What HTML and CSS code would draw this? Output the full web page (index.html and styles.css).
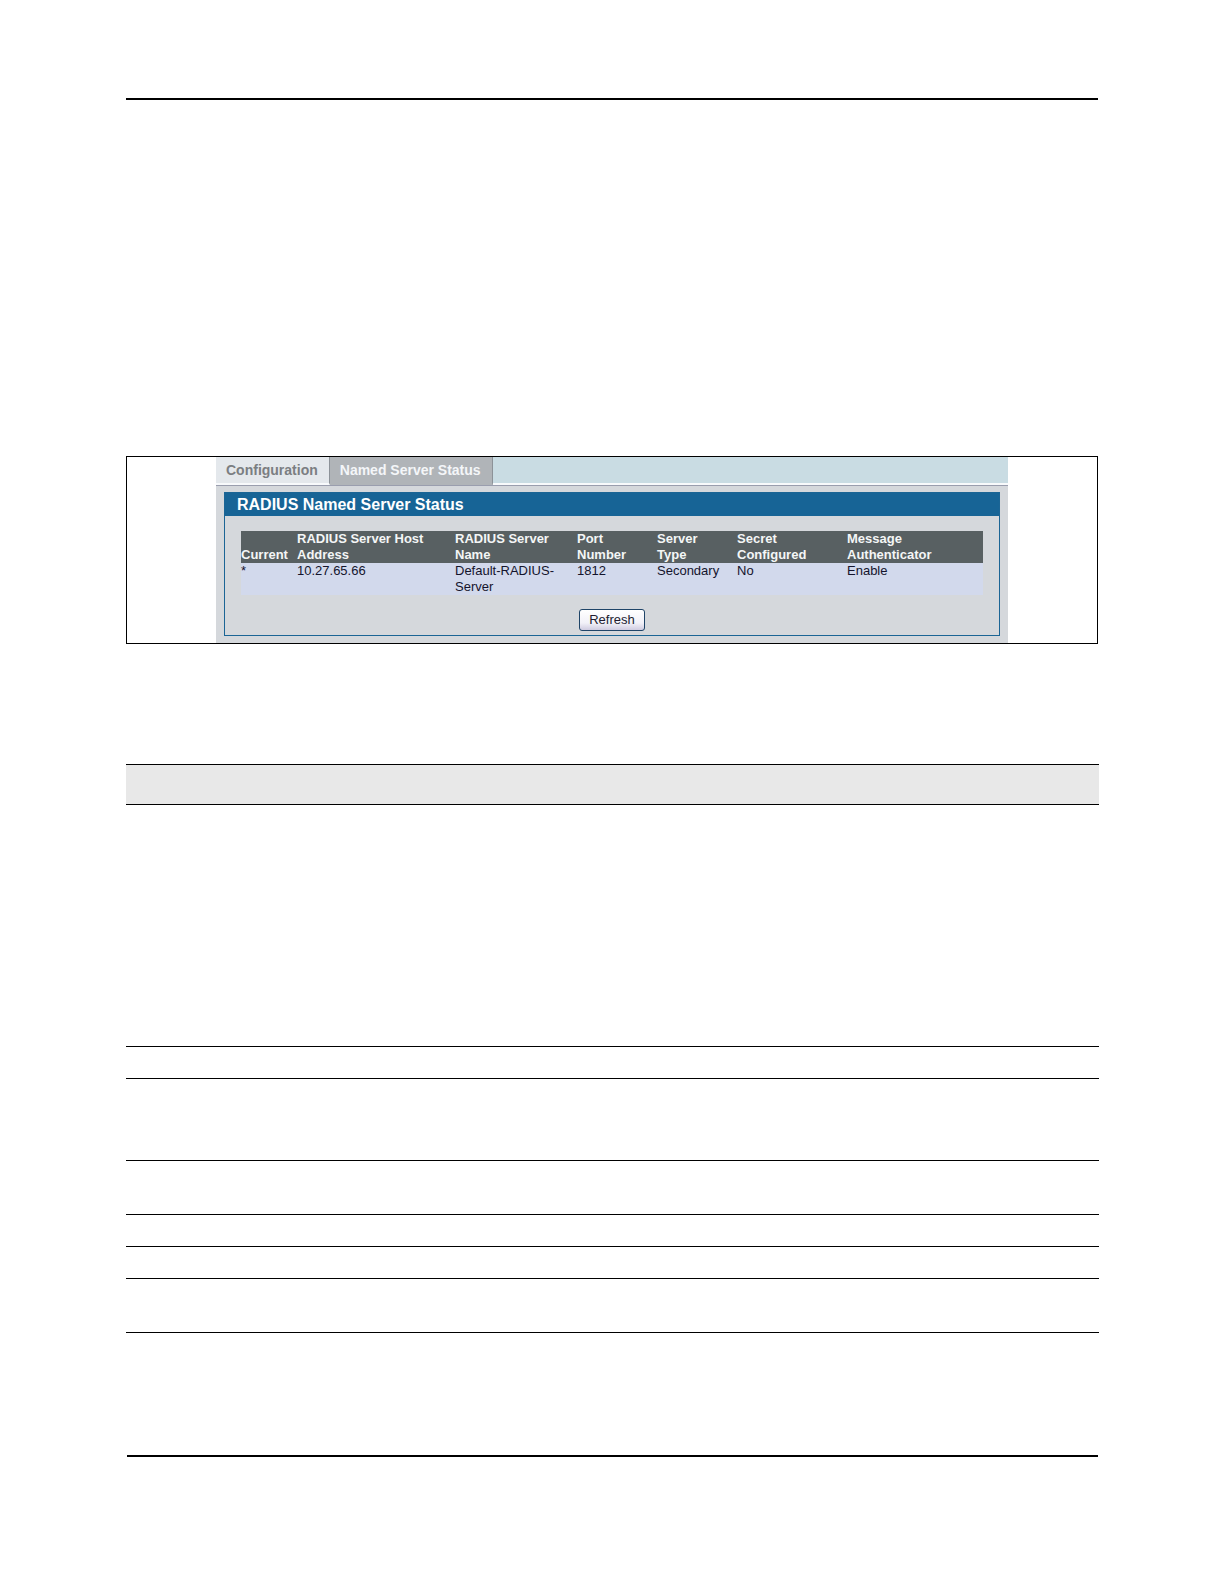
FILE: index.html
```
<!DOCTYPE html>
<html lang="en">
<head>
    <meta charset="UTF-8">
    <meta name="viewport" content="width=device-width, initial-scale=1.0">
    <title>RADIUS Named Server Status</title>
    <link rel="stylesheet" href="styles.css">
</head>
<body>
    <div class="page">
        <header class="page-header"></header>

        <main>
            <div class="figure">
                <div class="console">
                    <nav class="tabs">
                        <a href="#configuration" class="tab">Configuration</a>
                        <a href="#status" class="tab active">Named Server Status</a>
                    </nav>
                    <section class="panel" id="status">
                        <h2>RADIUS Named Server Status</h2>
                        <table class="servers">
                            <colgroup>
                                <col class="col-current">
                                <col class="col-host">
                                <col class="col-name">
                                <col class="col-port">
                                <col class="col-type">
                                <col class="col-secret">
                                <col>
                            </colgroup>
                            <thead>
                                <tr>
                                    <th>Current</th>
                                    <th>RADIUS Server Host<br>Address</th>
                                    <th>RADIUS Server<br>Name</th>
                                    <th>Port<br>Number</th>
                                    <th>Server<br>Type</th>
                                    <th>Secret<br>Configured</th>
                                    <th>Message<br>Authenticator</th>
                                </tr>
                            </thead>
                            <tbody>
                                <tr>
                                    <td>*</td>
                                    <td>10.27.65.66</td>
                                    <td>Default-RADIUS-<br>Server</td>
                                    <td>1812</td>
                                    <td>Secondary</td>
                                    <td>No</td>
                                    <td>Enable</td>
                                </tr>
                            </tbody>
                        </table>
                        <button type="button" class="refresh">Refresh</button>
                    </section>
                </div>
            </div>

            <div class="fields">
                <div class="field-head"></div>
                <div class="field tall"></div>
                <div class="field"></div>
                <div class="field triple"></div>
                <div class="field double"></div>
                <div class="field"></div>
                <div class="field"></div>
                <div class="field double"></div>
            </div>
        </main>

        <footer class="page-footer"></footer>
    </div>
</body>
</html>
```
FILE: styles.css
```
* {
    box-sizing: border-box;
}
body {
    margin: 0;
    background: white;
    font-family: "Liberation Sans", Arial, sans-serif;
}
.page {
    padding: 98px 126px 127px;
}
.page-header, .page-footer {
    border-top: 2px solid #000;
}

/* framed console */
.figure {
    margin-top: 356px;
    border: 1px solid #000;
}
.console {
    margin: 0 89px;
    padding-bottom: 7px;
    background: #d5d8dc;
}
.tabs {
    display: flex;
    height: 29px;
    background: #c9dce3;
    border-bottom: 1px solid #9a9eae;
}
.tab {
    height: 28px;
    padding: 0 11px 0 10px;
    border-right: 1px solid #8c9298;
    border-bottom: 2px solid #f8fafc;
    background: #e4e8ec;
    color: #7b7e82;
    font-size: 14px;
    font-weight: bold;
    line-height: 26px;
    text-decoration: none;
}
.tab.active {
    border-bottom-color: #b0b4b8;
    background: #b0b4b8;
    color: #f4f6f8;
}
.tabs::after {
    content: "";
    flex: 1;
    border-bottom: 2px solid #f8fafc;
}
.panel {
    margin: 6px 8px 0;
    padding-bottom: 4px;
    border: 1px solid #1b6595;
}
.panel h2 {
    margin: 0 0 15px;
    padding-left: 12px;
    background: #176496;
    color: white;
    font-size: 16px;
    line-height: 23px;
}
.servers {
    width: calc(100% - 32px);
    margin: 0 16px;
    border-collapse: collapse;
    table-layout: fixed;
    font-size: 13px;
    line-height: 16px;
}
.servers th, .servers td {
    padding: 0;
    text-align: left;
    white-space: nowrap;
}
.servers th {
    background: #586062;
    color: #f4f6f6;
    vertical-align: bottom;
}
.servers td {
    background: #d2d9ec;
    color: #14142c;
    vertical-align: top;
}
.col-current { width: 56px; }
.col-host { width: 158px; }
.col-name { width: 122px; }
.col-port { width: 80px; }
.col-type { width: 80px; }
.col-secret { width: 110px; }
.refresh {
    display: block;
    width: 66px;
    height: 22px;
    margin: 14px auto 0;
    padding: 0;
    border: 1px solid #1f4468;
    border-radius: 3px;
    background: linear-gradient(#ffffff, #f2f1f8 65%, #cfcbe0);
    color: #221c30;
    font-family: inherit;
    font-size: 13px;
    line-height: 18px;
}

/* ruled field list */
.fields {
    margin: 120px -1px 0 0;
}
.field-head {
    height: 41px;
    border-top: 1px solid #000;
    border-bottom: 1px solid #000;
    background: #e8e8e8;
}
.field {
    height: 32px;
    border-bottom: 1px solid #000;
}
.field.double { height: 54px; }
.field.triple { height: 82px; }
.field.tall { height: 242px; }

.page-footer {
    margin: 122px 0 0 1px;
}
```
